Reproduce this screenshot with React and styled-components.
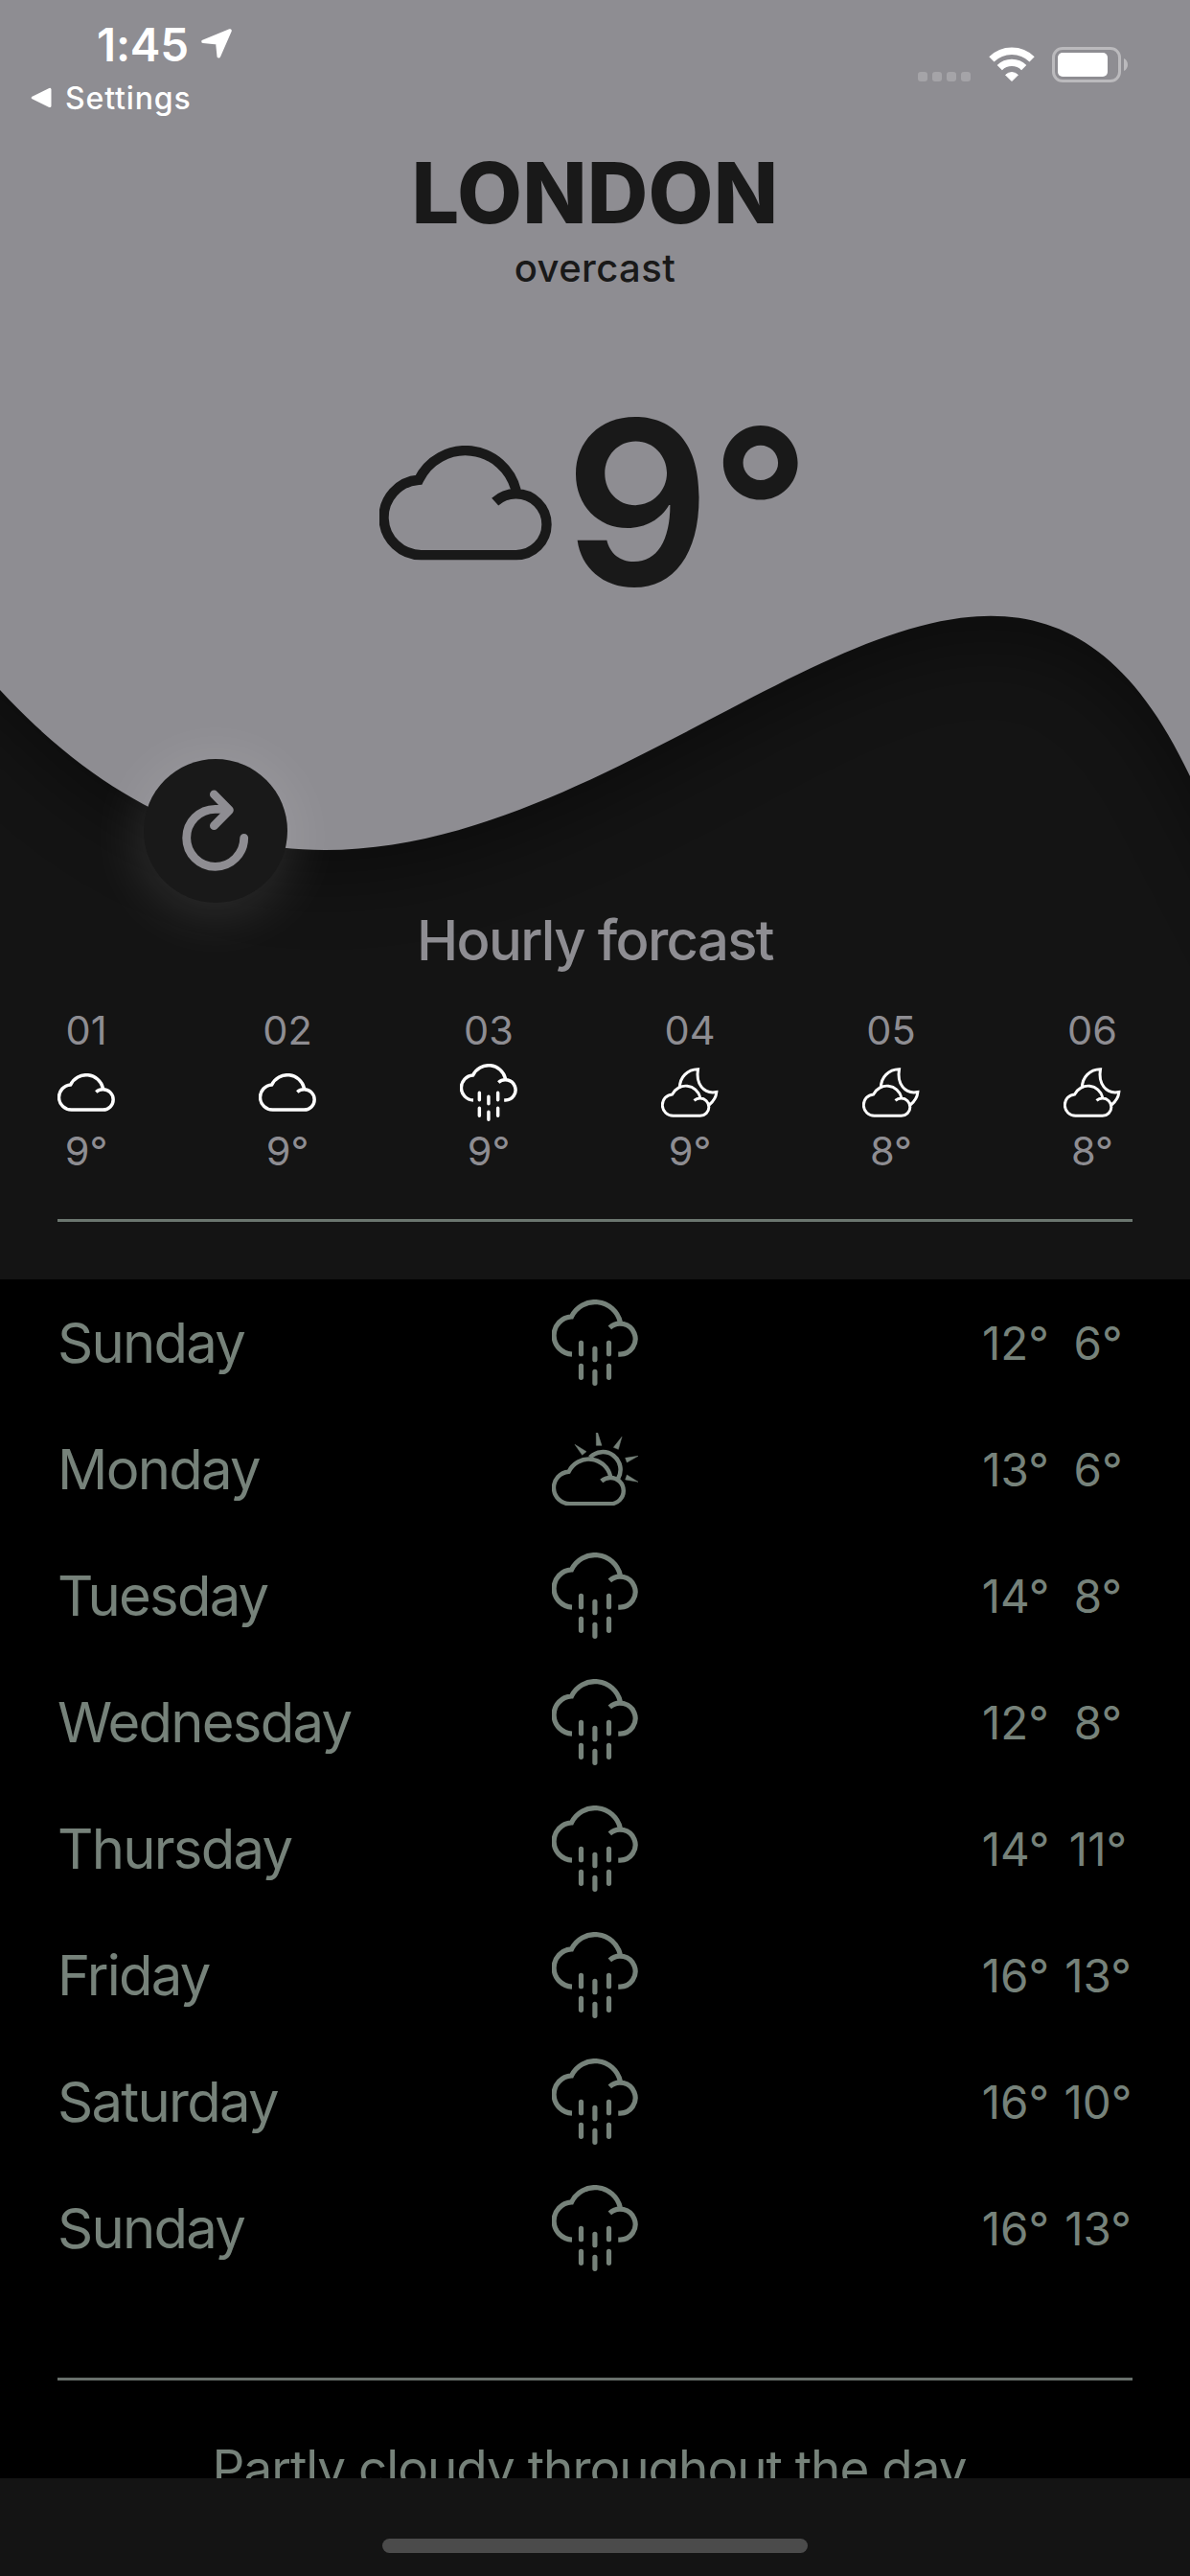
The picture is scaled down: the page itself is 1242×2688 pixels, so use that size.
import React from "react";
import styled, { createGlobalStyle } from "styled-components";

const GREY = "#8e8d92";
const INK = "#191919";
const PANEL = "#141414";
const SAGE = "#76827a";

const GlobalStyle = createGlobalStyle`
  * { box-sizing: border-box; }
  body { margin: 0; background: #000; font-family: Inter, "Liberation Sans", sans-serif; }
  svg { display: block; flex: none; }
`;

const Screen = styled.div`
  width: 1242px;
  height: 2688px;
  display: flex;
  flex-direction: column;
  overflow: hidden;
  background: #000;
`;

const TopPanel = styled.section`
  position: relative;
  flex: none;
  height: 1335px;
  display: flex;
  flex-direction: column;
  background: ${PANEL};
  overflow: hidden;
  & > * { position: relative; }
`;

const WaveArt = styled.svg`
  && { position: absolute; }
  top: 0;
  left: 0;
  overflow: visible;
  filter: drop-shadow(0 30px 34px rgba(0, 0, 0, 0.36));
`;

const StatusBar = styled.header`
  height: 112px;
  display: flex;
  justify-content: space-between;
  color: #fff;
`;

const StatusLeft = styled.div`
  display: flex;
  flex-direction: column;
`;

const Clock = styled.div`
  display: flex;
  align-items: center;
  gap: 12px;
  height: 92px;
  padding-left: 101px;
  font-size: 47.5px;
  font-weight: 600;
  letter-spacing: -0.2px;
`;

const BackLink = styled.div`
  display: flex;
  align-items: center;
  gap: 14px;
  height: 20px;
  padding-left: 32px;
  font-size: 32px;
  font-weight: 500;
  letter-spacing: 0.85px;
`;

const StatusRight = styled.div`
  display: flex;
  align-items: center;
  height: 135px;
  padding-right: 65px;
`;

const Signal = styled.div`
  display: flex;
  gap: 5px;
  margin: 25px 19px 0 0;
`;

const SignalDot = styled.i`
  width: 10px;
  height: 10px;
  border-radius: 3px;
  background: #a5a4a8;
`;

const BatteryIcon = styled.svg`
  margin-left: 18px;
`;

const City = styled.h1`
  margin: 38px 0 0;
  line-height: 102px;
  text-align: center;
  color: ${INK};
  font-size: 88px;
  font-weight: 800;
  letter-spacing: 0.2px;
`;

const Summary = styled.p`
  margin: 3px 0 0;
  line-height: 50px;
  text-align: center;
  color: ${INK};
  font-size: 40px;
  font-weight: 500;
  letter-spacing: 0.4px;
`;

const Now = styled.div`
  display: flex;
  align-items: center;
  gap: 13px;
  height: 200px;
  margin-top: 120px;
  padding-left: 396px;
  color: ${INK};
`;

const NowTemp = styled.span`
  padding-top: 2px;
  font-size: 238.5px;
  line-height: 200px;
  font-weight: 600;
`;

const Degree = styled.span`
  font-size: 228px;
`;

const RefreshButton = styled.button`
  flex: none;
  width: 150px;
  height: 150px;
  margin: 167px 0 0 150px;
  padding: 0;
  border: 0;
  border-radius: 50%;
  background: ${INK};
  color: ${GREY};
  box-shadow: 0 6px 64px rgba(255, 255, 255, 0.15);
`;

const HourlyTitle = styled.h2`
  margin: 9px 0 0;
  line-height: 60px;
  text-align: center;
  color: ${GREY};
  font-size: 58px;
  font-weight: 500;
  letter-spacing: -1.65px;
`;

const Hours = styled.div`
  display: flex;
  gap: 150px;
  margin-top: 39px;
  padding-left: 60px;
`;

const Hour = styled.div`
  width: 60px;
  display: flex;
  flex-direction: column;
  align-items: center;
  color: ${GREY};
  font-size: 41.5px;
  line-height: 50px;
`;

const HourIcon = styled.div`
  display: flex;
  align-items: center;
  justify-content: center;
  height: 60px;
  margin: 10px 0 6px;
  color: #fff;
`;

const Rule = styled.hr`
  flex: none;
  width: 1122px;
  height: 3px;
  margin: ${(p) => p.$top}px 60px 0;
  border: 0;
  background: ${(p) => p.$color};
`;

const Daily = styled.section`
  flex: 1;
  min-height: 0;
  overflow: hidden;
  color: ${SAGE};
`;

const DayRow = styled.div`
  display: grid;
  grid-template-columns: 1fr 90px 1fr;
  align-items: center;
  height: 132px;
  padding: 0 60px;
`;

const DayName = styled.span`
  font-size: 58px;
  letter-spacing: -1.75px;
`;

const DayTemps = styled.div`
  display: flex;
  justify-content: flex-end;
  margin-right: -5px;
  font-size: 47.5px;
`;

const DayTemp = styled.span`
  width: ${(p) => p.$width}px;
  text-align: center;
  white-space: nowrap;
`;

const Outlook = styled.p`
  margin: 62px 0 0;
  line-height: 60px;
  text-align: center;
  white-space: nowrap;
  font-size: 53px;
  letter-spacing: -1px;
`;

const HomeBar = styled.footer`
  flex: none;
  display: flex;
  justify-content: center;
  height: 102px;
  padding-top: 63px;
  background: ${PANEL};
`;

const HomeIndicator = styled.div`
  width: 444px;
  height: 15px;
  border-radius: 8px;
  background: #4b4b4b;
`;

const CLOUD =
  "M120.7 58.7A31.9 31.9 0 0 1 142.6 50.3A31.9 31.9 0 0 1 142.6 114.1H44.3A39.2 39.2 0 0 1 41 35.8A54.2 54.2 0 0 1 142.6 47";

const strokeProps = { fill: "none", stroke: "currentColor", strokeWidth: 10.4 };

function CloudIcon({ size }) {
  return (
    <svg width={size} height={(size * 2) / 3} viewBox="0 0 180 120">
      <path d={CLOUD} {...strokeProps} />
    </svg>
  );
}

function RainIcon({ size }) {
  return (
    <svg width={size} height={size} viewBox="0 0 180 180">
      <g {...strokeProps}>
        <path d="M120.7 58.7A31.9 31.9 0 1 1 142.6 114.1H138.5M42 114.1A39.2 39.2 0 0 1 41 35.8A54.2 54.2 0 0 1 142.6 47" />
        <path
          strokeLinecap="round"
          d="M61 90.5V113.5M61 138.7V162.7M89.8 102.5V125.5M89.8 150.7V174.7M119 90.5V113.5M119 138.7V162.7"
        />
      </g>
    </svg>
  );
}

function SunCloudIcon({ size }) {
  return (
    <svg width={size} height={size * 0.853} viewBox="0 0 180 153.5">
      <g transform="translate(0 50.7) scale(.857)">
        <path d={CLOUD} {...strokeProps} />
      </g>
      <path {...strokeProps} strokeWidth={9} d="M79.5 51.5A37 37 0 0 1 138 96" />
      <path
        fill="currentColor"
        stroke="currentColor"
        strokeWidth="1"
        d="M48 24.7L72 39.3L63.3 46.7ZM92.5 0H95.5L104 26.7H92.7ZM146 8.7L138.7 34.7L128.7 30.7ZM180 48.7L156.7 62L153.3 52.7ZM180 102.7L153.3 98L156.7 88Z"
      />
    </svg>
  );
}

function MoonCloudIcon({ size }) {
  return (
    <svg width={size} height={size * 0.867} viewBox="0 0 180 156">
      <g transform="translate(0 53) scale(.857)">
        <path d={CLOUD} {...strokeProps} />
      </g>
      <path
        {...strokeProps}
        strokeWidth={9}
        d="M58 64C58 30 82 6 115.5 5.5C108 50 132 84 173.5 76.5C172 94 163 106 150 117"
      />
    </svg>
  );
}

const ICONS = { cloud: CloudIcon, rain: RainIcon, sun: SunCloudIcon, moon: MoonCloudIcon };

function WeatherIcon({ kind, size }) {
  const Icon = ICONS[kind];
  return <Icon size={size} />;
}

const hours = [
  ["01", "cloud", 9],
  ["02", "cloud", 9],
  ["03", "rain", 9],
  ["04", "moon", 9],
  ["05", "moon", 8],
  ["06", "moon", 8],
];

const days = [
  ["Sunday", "rain", 12, 6],
  ["Monday", "sun", 13, 6],
  ["Tuesday", "rain", 14, 8],
  ["Wednesday", "rain", 12, 8],
  ["Thursday", "rain", 14, 11],
  ["Friday", "rain", 16, 13],
  ["Saturday", "rain", 16, 10],
  ["Sunday", "rain", 16, 13],
];

export default function App() {
  return (
    <Screen>
      <GlobalStyle />
      <TopPanel>
        <WaveArt width="1242" height="900" viewBox="0 0 1242 900">
          <path
            d="M-150 -150V600L0 720C501 1260 989 269.5 1242 810L1392 1100V-150Z"
            fill={GREY}
          />
        </WaveArt>
        <StatusBar>
          <StatusLeft>
            <Clock>
              1:45
              <svg width="34" height="34" viewBox="0 0 34 34">
                <path
                  d="M31 3L19.3 29.7L17.9 15.8L3 14.3Z"
                  fill="#fff"
                  stroke="#fff"
                  strokeWidth="3.6"
                  strokeLinejoin="round"
                />
              </svg>
            </Clock>
            <BackLink>
              <svg width="22" height="22" viewBox="0 0 22 22">
                <path
                  d="M2.2 11L20 2.4V19.6Z"
                  fill="#fff"
                  stroke="#fff"
                  strokeWidth="3"
                  strokeLinejoin="round"
                />
              </svg>
              Settings
            </BackLink>
          </StatusLeft>
          <StatusRight>
            <Signal>
              <SignalDot />
              <SignalDot />
              <SignalDot />
              <SignalDot />
            </Signal>
            <svg width="48" height="37" viewBox="0 0 48 37">
              <g fill="none" stroke="#fff" strokeWidth="7.4">
                <path d="M2.9 12.9A30 30 0 0 1 45.1 12.9" />
                <path d="M11.3 21.6A18 18 0 0 1 36.7 21.6" />
              </g>
              <path
                d="M24 35.6L17.6 29.2A9.2 9.2 0 0 1 30.4 29.2Z"
                fill="#fff"
                stroke="#fff"
                strokeWidth="1"
                strokeLinejoin="round"
              />
            </svg>
            <BatteryIcon width="79" height="37" viewBox="0 0 79 37">
              <rect x="1.5" y="1.5" width="69" height="34" rx="9.5" fill="none" stroke="#bbbabd" strokeWidth="3" />
              <rect x="6" y="6" width="52" height="25" rx="5" fill="#fff" />
              <path d="M75 12C80.3 14.2 80.3 22.8 75 25Z" fill="#bbbabd" />
            </BatteryIcon>
          </StatusRight>
        </StatusBar>
        <City>LONDON</City>
        <Summary>overcast</Summary>
        <Now>
          <WeatherIcon kind="cloud" size={180} />
          <NowTemp>
            9<Degree>°</Degree>
          </NowTemp>
        </Now>
        <RefreshButton aria-label="Refresh">
          <svg width="150" height="150" viewBox="0 0 150 150">
            <g fill="none" stroke="currentColor" strokeWidth="8.8" strokeLinecap="round" strokeLinejoin="round">
              <path d="M104.7 82.3A30 30 0 1 1 74.6 52.3H86" />
              <path d="M73.4 37L89.4 53.3L73.4 69.6" />
            </g>
          </svg>
        </RefreshButton>
        <HourlyTitle>Hourly forcast</HourlyTitle>
        <Hours>
          {hours.map(([label, kind, temp]) => (
            <Hour key={label}>
              {label}
              <HourIcon>
                <WeatherIcon kind={kind} size={60} />
              </HourIcon>
              {temp}°
            </Hour>
          ))}
        </Hours>
        <Rule $top={46} $color="#6b766f" />
      </TopPanel>
      <Daily>
        {days.map(([name, kind, high, low], i) => (
          <DayRow key={i}>
            <DayName>{name}</DayName>
            <WeatherIcon kind={kind} size={90} />
            <DayTemps>
              <DayTemp $width={90}>{high}°</DayTemp>
              <DayTemp $width={82}>{low}°</DayTemp>
            </DayTemps>
          </DayRow>
        ))}
        <Rule $top={90} $color="#68706b" />
        <Outlook>Partly cloudy throughout the day.</Outlook>
      </Daily>
      <HomeBar>
        <HomeIndicator />
      </HomeBar>
    </Screen>
  );
}
